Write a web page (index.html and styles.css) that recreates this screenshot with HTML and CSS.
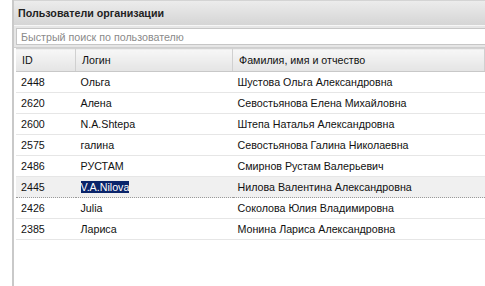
FILE: index.html
```html
<!DOCTYPE html>
<html lang="ru">
<head>
  <meta charset="UTF-8" />
  <title>Пользователи организации</title>
  <link rel="stylesheet" href="styles.css">
</head>
<body>
  <div class="panel">
    <div class="panel-title">Пользователи организации</div>

    <!-- Quick search -->
    <div class="search-bar">
      <input type="text" class="search-input" placeholder="Быстрый поиск по пользователю" />
    </div>

    <!-- Users grid -->
    <div class="grid-wrap">
      <table class="grid">
        <thead>
          <tr>
            <th class="col-id">ID</th>
            <th class="col-login">Логин</th>
            <th class="col-name">Фамилия, имя и отчество</th>
          </tr>
        </thead>
        <tbody>
          <tr><td>2448</td><td>Ольга</td><td>Шустова Ольга Александровна</td></tr>
          <tr><td>2620</td><td>Алена</td><td>Севостьянова Елена Михайловна</td></tr>
          <tr><td>2600</td><td>N.A.Shtepa</td><td>Штепа Наталья Александровна</td></tr>
          <tr><td>2575</td><td>галина</td><td>Севостьянова Галина Николаевна</td></tr>
          <tr><td>2486</td><td>РУСТАМ</td><td>Смирнов Рустам Валерьевич</td></tr>
          <tr class="selected"><td>2445</td><td><span class="highlight">V.A.Nilova</span></td><td>Нилова Валентина Александровна</td></tr>
          <tr><td>2426</td><td>Julia</td><td>Соколова Юлия Владимировна</td></tr>
          <tr><td>2385</td><td>Лариса</td><td>Монина Лариса Александровна</td></tr>
        </tbody>
      </table>
    </div>
  </div>
</body>
</html>
```

FILE: styles.css
```css
html, body {
  height: 100%;
}

body {
  margin: 0;
  padding-left: 12px;
  background: #fff;
  font-family: "Liberation Sans", Arial, sans-serif;
  font-size: 10.7px;
  color: #111;
  overflow: hidden;
}

.panel {
  height: 100%;
  display: flex;
  flex-direction: column;
  border-left: 2px solid #c9c9c9;
}

.panel-title {
  height: 24px;
  line-height: 25px;
  padding-left: 4px;
  border-top: 1px solid #d4d4d4;
  border-bottom: 1px solid #f6f6f6;
  background: linear-gradient(#ececec, #d5d5d5);
  font-weight: bold;
  color: #222;
}

.search-bar {
  background: #e6e6e6;
  padding: 2px 0 2px 2px;
  border-bottom: 1px solid #cfcfcf;
}

.search-input {
  display: block;
  box-sizing: border-box;
  width: 100%;
  height: 17px;
  margin: 0;
  padding: 0 4px;
  border: 1px solid #c6c6c6;
  border-right: none;
  font-family: inherit;
  font-size: 10.7px;
}

.search-input::placeholder {
  color: #8a8a8a;
}

.grid-wrap {
  flex: 1;
  margin-left: 2px;
  background: #fff;
}

.grid {
  width: 100%;
  border-collapse: collapse;
  table-layout: fixed;
}

.grid th {
  height: 22px;
  padding: 0 6px;
  text-align: left;
  font-weight: normal;
  background: linear-gradient(#f7f7f7, #e4e4e4);
  border-top: 1px solid #d2d2d2;
  border-bottom: 1px solid #c8c8c8;
  border-right: 1px solid #d0d0d0;
}

.grid .col-id {
  width: 47px;
}

.grid .col-login {
  width: 144px;
}

.grid td {
  height: 20px;
  padding: 0 5px;
  border-bottom: 1px solid #e6e6e6;
  white-space: nowrap;
}

.grid tr.selected td {
  background: #f0f0f0;
  border-top: 1px dotted #9a9a9a;
  border-bottom: 1px dotted #9a9a9a;
}

.highlight {
  background: #0a246a;
  color: #fff;
}
```
